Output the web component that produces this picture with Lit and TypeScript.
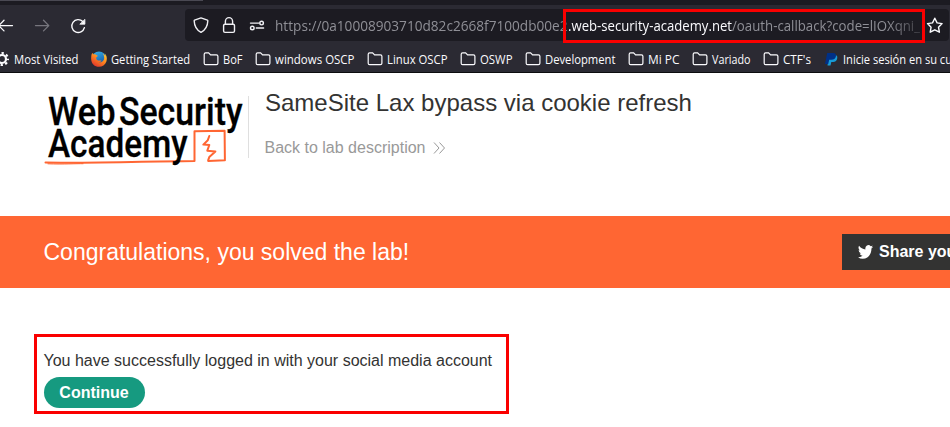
import { LitElement, html, svg, css } from "lit";
import { customElement } from "lit/decorators.js";

interface Bookmark {
  icon: "gear" | "firefox" | "folder" | "paypal";
  label: string;
  width: number;
}

const BOOKMARKS: Bookmark[] = [
  { icon: "gear", label: "Most Visited", width: 64.5 },
  { icon: "firefox", label: "Getting Started", width: 79 },
  { icon: "folder", label: "BoF", width: 19.5 },
  { icon: "folder", label: "windows OSCP", width: 79.5 },
  { icon: "folder", label: "Linux OSCP", width: 60.5 },
  { icon: "folder", label: "OSWP", width: 32.5 },
  { icon: "folder", label: "Development", width: 70.5 },
  { icon: "folder", label: "Mi PC", width: 31.5 },
  { icon: "folder", label: "Variado", width: 38.5 },
  { icon: "folder", label: "CTF's", width: 28 },
  { icon: "paypal", label: "Inicie sesión en su cu", width: 109 },
];

/* Text set to an exact advance width. */
const fitted = (label: string, width: number, height: number, baseline: number, cls: string) => html`
  <svg class=${cls} width=${width} height=${height}>
    <text x="0" y=${baseline} textLength=${width} lengthAdjust="spacingAndGlyphs">${label}</text>
  </svg>`;

const bookmarkIcon = (icon: Bookmark["icon"]) => {
  switch (icon) {
    case "folder":
      return svg`<path d="M1.2 12.2V3.2Q1.2 1.8 2.6 1.8H5.6L7.6 3.8H13.4Q14.9 3.8 14.9 5.2V12.2Q14.9 13.6 13.4 13.6H2.6Q1.2 13.6 1.2 12.2Z" fill="none" stroke="#fbfbfe" stroke-width="1.2"/>`;
    case "gear":
      return svg`<circle cx="8" cy="8" r="4" fill="none" stroke="#fbfbfe" stroke-width="2.2"/>
        <circle cx="8" cy="8" r="5.9" fill="none" stroke="#fbfbfe" stroke-width="2.2" stroke-dasharray="2.3 2.33" stroke-dashoffset="1.15"/>`;
    case "firefox":
      return svg`<defs>
          <linearGradient id="ff" x1=".9" y1="0" x2=".2" y2="1"><stop offset="0" stop-color="#ffd83b"/><stop offset=".45" stop-color="#ff8a1f"/><stop offset="1" stop-color="#e0302d"/></linearGradient>
          <linearGradient id="globe" x1="0" y1="0" x2=".4" y2="1"><stop offset="0" stop-color="#37b7ee"/><stop offset="1" stop-color="#1456a6"/></linearGradient>
        </defs>
        <circle cx="8" cy="7.6" r="7.2" fill="url(#globe)"/>
        <path d="M.7 3C1 2.6 1.3 2.2 1.6 1.9L2.6 3.4C3.8 3 5 3.3 5.4 4L6.7 4.8C6.7 5.6 5.5 5.8 5.2 6.5L5.3 8C6.5 10.6 9.6 9.2 10.5 9.4C9.6 11.2 7.6 11.2 7.1 11.1C10.4 12.3 13.2 10 13.2 7.1C13.2 5 12.7 3.7 11.9 2.5C13.2 3 14 4.4 14.3 5.1L14.1 2.8C15.8 4.6 16.2 7.8 15.4 10.4C14.2 14 11.3 15.8 8 15.8C3.6 15.8 .5 12.6 .2 8.4C.1 6.2 .2 4.5 .7 3Z" fill="url(#ff)"/>`;
    case "paypal":
      return svg`<path d="M5.8 4.2H13.2Q15 5.4 14.1 8.1Q13.2 11 10.1 11H8.3L7.5 14.4H4.5Z" fill="#179bd7"/>
        <path d="M4.2 2H10.2Q13.6 2.3 12.9 5.5Q12 8.8 8.5 8.8H6.2L5.2 13H2Z" fill="#003087"/>`;
  }
};

@customElement("browser-toolbar")
export class BrowserToolbar extends LitElement {
  static styles = css`
    :host { display: block; height: 73px; box-sizing: border-box; background: #2b2a33; border-bottom: 1px solid #0c0c0e; overflow: hidden; }
    .tabs { height: 5px; background: #1c1b22; }
    .tab { width: 203px; height: 1px; background: #4a4953; }
    .nav { height: 36px; padding-top: 4px; box-sizing: border-box; display: flex; }
    .buttons { width: 185px; flex: none; height: 32px; }
    .url { width: 764px; flex: none; height: 32px; border-radius: 4px; background: #1c1b22; display: flex; align-items: center; }
    .identity, .star { flex: none; }
    .address { width: 648px; height: 32px; display: flex; flex: none; overflow: hidden; -webkit-mask-image: linear-gradient(90deg, #000 612px, rgba(0, 0, 0, 0.25) 646px); mask-image: linear-gradient(90deg, #000 612px, rgba(0, 0, 0, 0.25) 646px); }
    .dim, .host { flex: none; font: 15px "Open Sans", "Noto Sans", sans-serif; fill: #8f8f96; }
    .host { fill: #fbfbfe; }
    .bookmarks { display: flex; gap: 12.5px; height: 31px; padding-top: 4px; box-sizing: border-box; align-items: center; margin-left: -6px; width: 970px; }
    .item { display: flex; gap: 4px; align-items: center; flex: none; height: 18px; }
    .label { overflow: visible; font: 12.2px "Open Sans", "Noto Sans", sans-serif; fill: #fbfbfe; }
  `;

  render() {
    return html`
      <div class="tabs"><div class="tab"></div></div>
      <div class="nav">
        <svg class="buttons" viewBox="0 0 185 32" fill="none" stroke-width="1.3" stroke-linecap="round" stroke-linejoin="round">
          <path d="M-1 16.6H12.5M4 11.3L-1.2 16.6L4 21.9" stroke="#fbfbfe"/>
          <path d="M35.5 16.6H48.5M43.5 11.3L48.8 16.6L43.5 21.9" stroke="#77767e"/>
          <path d="M82.8 12.6A6.4 6.4 0 1 0 84.4 18.6" stroke="#fbfbfe" stroke-width="1.4"/>
          <path d="M84.9 10.7V15.2H80.2Z" fill="#fbfbfe" stroke="#fbfbfe" stroke-width=".8"/>
        </svg>
        <div class="url">
          <svg class="identity" width="90" height="32" fill="none" stroke="#f0f0f4" stroke-width="1.4" stroke-linecap="round" stroke-linejoin="round">
            <path d="M16 8.9L22.4 11.2Q22.9 11.4 22.8 12C22.6 17.4 20.8 20.8 16 23.4C11.2 20.8 9.4 17.4 9.2 12Q9.1 11.4 9.6 11.2Z"/>
            <rect x="38.6" y="15.2" width="10.9" height="8.2" rx="1.4"/>
            <path d="M40.4 15V12.2A3.6 3.6 0 0 1 47.6 12.2V15"/>
            <path d="M65.5 14.1H74M71.3 19H78.6"/>
            <circle cx="76.6" cy="14.1" r="1.8"/><circle cx="67.3" cy="19" r="1.8"/>
          </svg>
          <div class="address">
            ${fitted("https://0a10008903710d82c2668f7100db00e2", 292.5, 32, 22, "dim")}
            ${fitted(".web-security-academy.net", 164, 32, 22, "host")}
            ${fitted("/oauth-callback?code=lIOXqni_", 188, 32, 22, "dim")}
          </div>
          <svg class="star" width="26" height="32" fill="none" stroke="#fbfbfe" stroke-width="1.4" stroke-linejoin="round">
            <path d="M11.8 9.2L14.1 13.9L19.1 14.6L15.5 18.2L16.4 23.2L11.8 20.8L7.2 23.2L8.1 18.2L4.5 14.6L9.5 13.9Z"/>
          </svg>
        </div>
      </div>
      <div class="bookmarks">
        ${BOOKMARKS.map((b) => html`
          <div class="item">
            <svg width="16" height="16" viewBox="0 0 16 16">${bookmarkIcon(b.icon)}</svg>
            ${fitted(b.label, b.width, 18, 14, "label")}
          </div>`)}
      </div>
    `;
  }
}

@customElement("academy-logo")
export class AcademyLogo extends LitElement {
  static styles = css`
    :host { display: block; width: 204px; height: 76px; }
    .word { font: 500 38px Roboto, "Open Sans", sans-serif; fill: #000; stroke: #000; stroke-width: 0.3px; }
  `;

  render() {
    return html`
      <svg width="204" height="76" viewBox="0 0 204 76">
        <g fill="none" stroke="#ff6633" stroke-linecap="round" stroke-linejoin="round">
          <path d="M1.5 72.6C40 73.2 90 71.6 150.5 71V41.3L180.6 40.8L180.9 70.3L164.3 70.9" stroke-width="2"/>
          <path d="M4 73.8C20 74.4 32 73.5 39 73.7" stroke-width="1"/>
          <path d="M165.3 46L163.8 50.2L159.3 54.6L165.3 55L163.3 60.7L171.4 61.5L165.3 67.1L164.2 70.2" stroke-width="2"/>
        </g>
        <text class="word" x="4" y="34.5" textLength="67.5" lengthAdjust="spacingAndGlyphs">Web</text>
        <text class="word" x="75" y="34.5" textLength="123.5" lengthAdjust="spacingAndGlyphs">Security</text>
        <text class="word" x="4" y="66.8" textLength="139.5" lengthAdjust="spacingAndGlyphs">Academy</text>
      </svg>`;
  }
}

@customElement("app-root")
export class AppRoot extends LitElement {
  static styles = css`
    :host { display: block; position: relative; width: 950px; height: 427px; overflow: hidden; background: #fff; color: #333332; font: 16px "Liberation Sans", Arial, sans-serif; }
    .lab { height: 143px; padding: 17px 0 0 44px; box-sizing: border-box; display: flex; }
    .info { height: 62px; margin-top: 6px; padding-left: 16px; border-left: 1px solid #dfdfdf; }
    .title { margin: -7px 0 0; font-size: 24px; line-height: 28px; font-weight: 400; white-space: nowrap; }
    .back { display: flex; align-items: center; gap: 8px; margin-top: 21px; line-height: 20px; color: #999; margin-left: -0.5px; }
    .banner { height: 72px; background: #ff6633; color: #fff; display: flex; align-items: center; justify-content: space-between; padding-left: 43.5px; }
    .solved { font-size: 23px; line-height: 28px; white-space: nowrap; }
    .share { width: 108px; height: 36px; background: #333332; display: flex; align-items: center; gap: 6px; padding-left: 16px; box-sizing: border-box; overflow: hidden; font-weight: 700; white-space: nowrap; }
    .share svg { flex: none; }
    .result { padding: 63px 0 0 43.5px; }
    .message { margin: 0 0 7px; line-height: 19px; }
    .continue { display: block; width: 101px; height: 31px; border: 0; border-radius: 16px; padding: 0; background: #169a80; color: #fff; font: 700 16px "Liberation Sans", Arial, sans-serif; }
    .mark { position: absolute; box-sizing: border-box; border: 3px solid #fa0000; pointer-events: none; }
    .mark-url { left: 563px; top: 9px; width: 362px; height: 34px; }
    .mark-result { left: 34px; top: 334px; width: 475px; height: 80px; }
  `;

  render() {
    return html`
      <browser-toolbar></browser-toolbar>
      <header class="lab">
        <academy-logo></academy-logo>
        <div class="info">
          <h2 class="title">SameSite Lax bypass via cookie refresh</h2>
          <div class="back">
            <span>Back to lab description</span>
            <svg width="13" height="14" fill="none" stroke="#999" stroke-width="1"><path d="M1 1.5L6 7L1 12.5M6.5 1.5L11.5 7L6.5 12.5"/></svg>
          </div>
        </div>
      </header>
      <section class="banner">
        <div class="solved">Congratulations, you solved the lab!</div>
        <div class="share">
          <svg width="15" height="14" viewBox="0 2 24 20" preserveAspectRatio="none" fill="#fff"><path d="M24 4.6a10 10 0 0 1-2.8.8 5 5 0 0 0 2.2-2.7c-1 .6-2 1-3.1 1.2a4.9 4.9 0 0 0-8.4 4.5C7.7 8.1 4.1 6.1 1.7 3.1a4.9 4.9 0 0 0 1.5 6.6c-.8 0-1.6-.2-2.2-.6v.1a4.9 4.9 0 0 0 3.9 4.8 5 5 0 0 1-2.2.1 4.9 4.9 0 0 0 4.6 3.4A9.9 9.9 0 0 1 0 19.5 14 14 0 0 0 7.5 21.7c9.1 0 14-7.5 14-14v-.6A10 10 0 0 0 24 4.6z"/></svg>
          <span>Share you</span>
        </div>
      </section>
      <main class="result">
        <p class="message">You have successfully logged in with your social media account</p>
        <button class="continue">Continue</button>
      </main>
      <div class="mark mark-url"></div>
      <div class="mark mark-result"></div>
    `;
  }
}
